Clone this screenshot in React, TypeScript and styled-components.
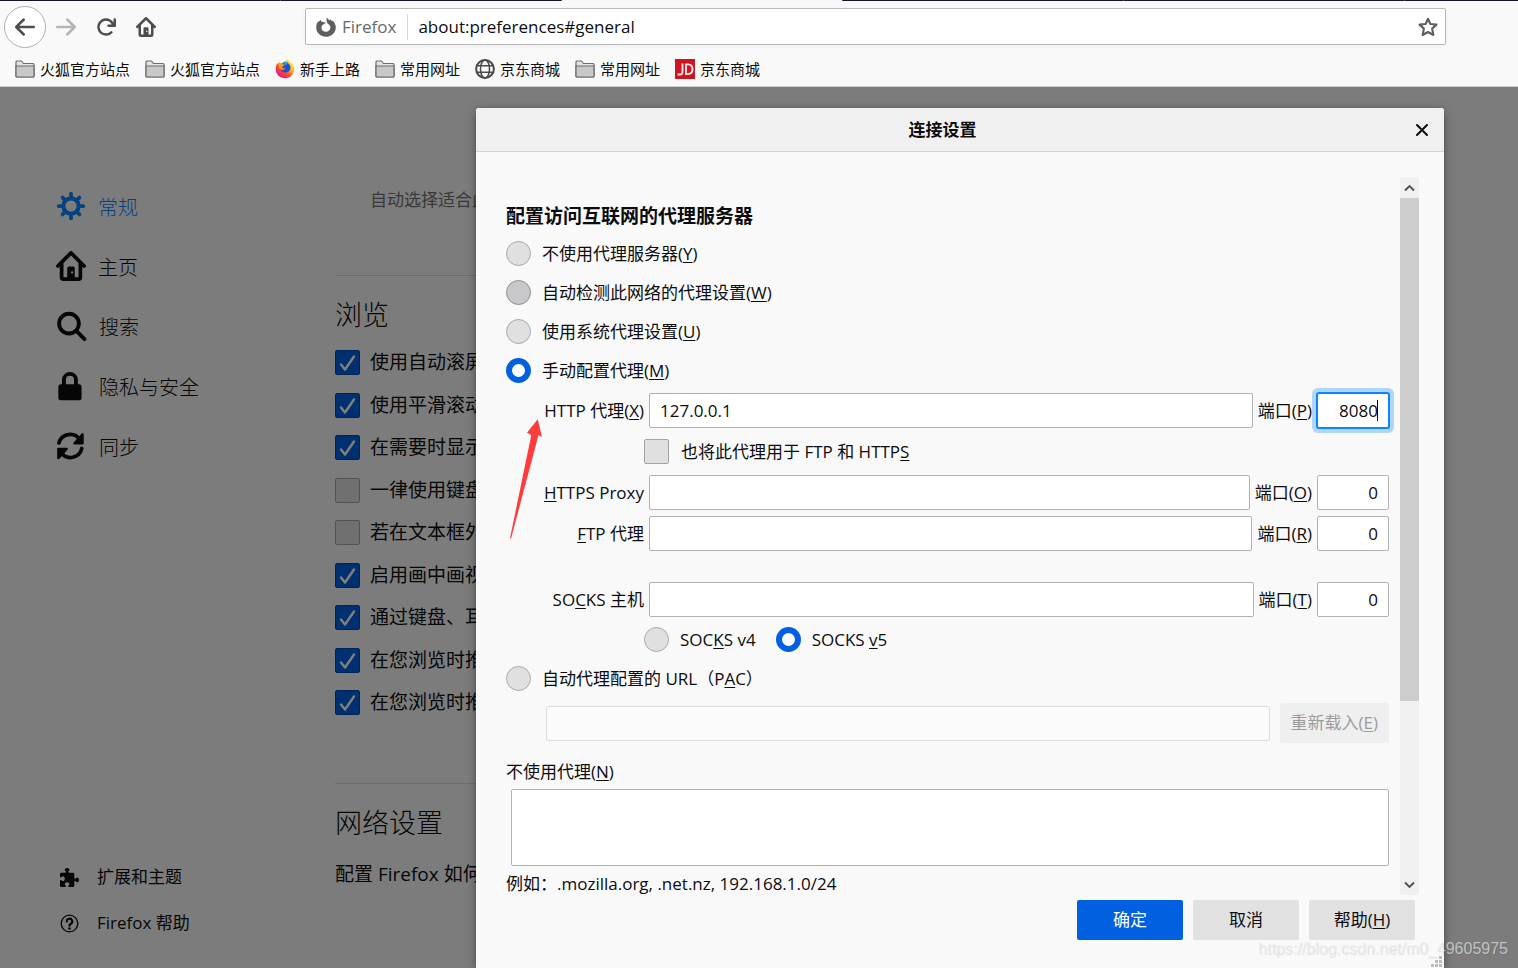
import React from "react";
import styled, { createGlobalStyle, css } from "styled-components";

const GlobalStyle = createGlobalStyle`
  *, *::before, *::after { box-sizing: border-box; }
  body {
    margin: 0;
    background: #f9f9fa;
    color: #0c0c0d;
    font-family: "Open Sans", "Noto Sans CJK SC", sans-serif;
    font-size: 17px;
    line-height: 24px;
  }
  button, input, textarea { font: inherit; color: inherit; margin: 0; }
  h1, h2, h3, p { margin: 0; }
`;

/* ---------- Window ---------- */

const Window = styled.div`
  display: flex;
  flex-direction: column;
  min-height: 100vh;
`;

const TabStrip = styled.div`
  display: flex;
  height: 1px;
  background: #14142b;
`;

const TabEdge = styled.span<{ $active?: boolean }>`
  flex: 0 0 281px;
  border-right: 1px solid #55556a;
  background: ${(p) => (p.$active ? "#f5f6f7" : "transparent")};
`;

const NavBar = styled.nav`
  display: flex;
  align-items: center;
  height: 51px;
  padding: 0 72px 0 4px;
  background: #f9f9fa;
`;

const ToolButton = styled.button<{ $round?: boolean }>`
  display: grid;
  place-items: center;
  width: 40px;
  height: 40px;
  padding: 0;
  border: 0;
  background: transparent;
  color: #4d4d4f;
  &:disabled { color: #b4b4b5; }
  ${(p) =>
    p.$round &&
    css`
      width: 42px;
      height: 42px;
      border: 1px solid #b1b1b3;
      border-radius: 50%;
      background: #fff;
    `}
`;

const AddressBar = styled.div`
  display: flex;
  align-items: center;
  flex: 1;
  height: 37px;
  margin-left: 139px;
  padding: 0 7px 0 10px;
  border: 1px solid #b8b8ba;
  border-radius: 2px;
  background: #fff;
  box-shadow: 0 1px 4px rgba(0, 0, 0, 0.05);
`;

const Identity = styled.span`
  display: flex;
  align-items: center;
  gap: 6px;
  height: 26px;
  padding-right: 11px;
  border-right: 1px solid #d7d7db;
  color: #68686b;
`;

const AddressInput = styled.input`
  flex: 1;
  min-width: 0;
  padding: 0 10px;
  border: 0;
  outline: 0;
  background: transparent;
  color: #0c0c0d;
`;

const StarButton = styled.button`
  display: grid;
  place-items: center;
  padding: 0;
  border: 0;
  background: transparent;
  color: #5f5f61;
`;

const Bookmarks = styled.div`
  display: flex;
  align-items: center;
  gap: 15px;
  height: 35px;
  padding: 0 15px;
  border-bottom: 1px solid #cfcfd1;
  background: #f9f9fa;
`;

const Bookmark = styled.a`
  display: flex;
  align-items: center;
  gap: 5px;
  color: #0c0c0d;
  font-size: 15px;
  line-height: 22px;
  text-decoration: none;
`;

/* ---------- Preferences page ---------- */

const Page = styled.div`
  position: relative;
  display: flex;
  flex: 1;
  background: #f9f9fa;
`;

const Sidebar = styled.aside`
  display: flex;
  flex-direction: column;
  flex: 0 0 335px;
  padding: 91px 0 22px 56px;
`;

const Category = styled.a<{ $selected?: boolean }>`
  display: flex;
  align-items: center;
  gap: 12px;
  height: 60px;
  color: ${(p) => (p.$selected ? "#0a84ff" : "#0c0c0d")};
  font-size: 20px;
  font-weight: 300;
  text-decoration: none;
  & > svg { margin-bottom: 4px; }
`;

const SideFooter = styled.div`
  margin-top: auto;
`;

const SideLink = styled.a`
  display: flex;
  align-items: center;
  gap: 18px;
  height: 46px;
  padding-left: 4px;
  color: #0c0c0d;
  text-decoration: none;
`;

const Content = styled.main`
  flex: 1;
  min-width: 0;
  margin-right: 74px;
  overflow: hidden;
  white-space: nowrap;
`;

const Note = styled.p`
  padding: 101px 0 63px 35px;
  color: #737373;
`;

const Section = styled.section`
  border-top: 1px solid #d7d7db;
  padding-top: 22px;
`;

const SectionTitle = styled.h2`
  margin-bottom: 14px;
  font-size: 27px;
  font-weight: 300;
  line-height: 34px;
`;

const PrefRow = styled.label`
  display: flex;
  align-items: center;
  gap: 10px;
  height: 32px;
  margin-bottom: 11px;
  font-size: 19px;
  line-height: 32px;
  &:nth-of-type(even) { margin-bottom: 10px; }
`;

const NetworkSection = styled(Section)`
  margin-top: 65px;
`;

const NetworkText = styled.p`
  padding-top: 4px;
  font-size: 19px;
  line-height: 32px;
`;

const Shade = styled.div`
  position: absolute;
  inset: 0;
  display: flex;
  padding: 21px 74px 0 476px;
  background: rgba(0, 0, 0, 0.5);
`;

/* ---------- Controls ---------- */

const BoxStack = styled.span`
  display: grid;
  flex: none;
  width: 25px;
  height: 25px;
  & > * { grid-area: 1 / 1; }
`;

const CheckInput = styled.input`
  appearance: none;
  width: 25px;
  height: 25px;
  border: 1px solid #a4a4a6;
  border-radius: 2px;
  background: #e0e0e1;
  &:checked { background: #0060df; border-color: #0049ae; }
`;

const RadioInput = styled.input<{ $hover?: boolean }>`
  appearance: none;
  flex: none;
  width: 25px;
  height: 25px;
  border: 1px solid ${(p) => (p.$hover ? "#8f8f91" : "#a9a9ab")};
  border-radius: 50%;
  background: ${(p) => (p.$hover ? "#c8c8ca" : "#e0e0e1")};
  &:checked {
    border: 6px solid #0060df;
    background: #fff;
  }
`;

const TextInput = styled.input`
  flex: 1;
  min-width: 0;
  height: 35px;
  padding: 0 10px;
  border: 1px solid #b1b1b3;
  border-radius: 2px;
  outline: 0;
  background: #fff;
  &:disabled { border-color: #dcdcdd; background: #fbfbfb; }
`;

const PortBox = styled.span`
  position: relative;
  display: flex;
  flex: 0 0 72px;
`;

const PortInput = styled(TextInput)<{ $focused?: boolean }>`
  width: 72px;
  text-align: right;
  ${(p) =>
    p.$focused &&
    css`
      border-color: #0a84ff;
      box-shadow: 0 0 0 1px #0a84ff, 0 0 0 5px rgba(10, 132, 255, 0.3);
    `}
`;

const Caret = styled.span`
  position: absolute;
  top: 7px;
  right: 11px;
  width: 1px;
  height: 21px;
  background: #000;
`;

const Button = styled.button<{ $primary?: boolean }>`
  height: 40px;
  min-width: 106px;
  padding: 0 11px;
  border: 0;
  border-radius: 2px;
  background: ${(p) => (p.$primary ? "#0060df" : "#e1e1e2")};
  color: ${(p) => (p.$primary ? "#fff" : "#0c0c0d")};
  &:disabled { background: #efefef; color: #9c9c9d; }
`;

const Key = styled.u`
  text-decoration-thickness: 1px;
  text-underline-offset: 2px;
`;

/* ---------- Dialog ---------- */

const Dialog = styled.div`
  position: relative;
  display: flex;
  flex-direction: column;
  flex: 1;
  min-width: 0;
  border-radius: 3px 3px 0 0;
  background: #f9f9fa;
  box-shadow: 0 2px 8px rgba(0, 0, 0, 0.45);
`;

const DialogHeader = styled.header`
  display: grid;
  grid-template-columns: 1fr 36px;
  align-items: center;
  height: 44px;
  padding: 0 4px 0 5px;
  border-bottom: 1px solid #d2d2d4;
  border-radius: 3px 3px 0 0;
  background: #f0f0f1;
`;

const DialogTitle = styled.h1`
  font-size: 17px;
  line-height: 24px;
  text-align: center;
`;

const CloseButton = styled.button`
  display: grid;
  place-items: center;
  height: 36px;
  padding: 0;
  border: 0;
  background: transparent;
`;

const ScrollArea = styled.div`
  display: flex;
  height: 718px;
  margin: 25px 25px 0 30px;
`;

const Form = styled.form`
  position: relative;
  flex: 1;
  min-width: 0;
  padding: 27px 11px 0 0;
  overflow: hidden;
`;

const Legend = styled.h2`
  margin-bottom: 6px;
  font-size: 19px;
  line-height: 24px;
`;

const RadioRow = styled.label`
  display: flex;
  align-items: center;
  gap: 11px;
  height: 39px;
`;

const ProxyRow = styled.div`
  display: flex;
  align-items: center;
  gap: 5px;
  height: 41px;
  padding-left: 30px;
`;

const ProxyLabel = styled.label`
  flex: 0 0 108px;
  text-align: right;
  white-space: nowrap;
`;

const ShareRow = styled.label`
  display: flex;
  align-items: center;
  gap: 12px;
  height: 41px;
  padding-left: 138px;
`;

const SocksRow = styled(ProxyRow)`
  margin-top: 25px;
`;

const VersionRow = styled.div`
  display: flex;
  gap: 20px;
  padding-left: 138px;
`;

const PacRow = styled.div`
  display: flex;
  align-items: center;
  gap: 10px;
  margin: 5px 0 17px;
  padding-left: 40px;
`;

const ExceptionsLabel = styled.label`
  display: block;
`;

const Exceptions = styled.textarea`
  display: block;
  width: calc(100% - 5px);
  height: 77px;
  margin: 5px 0 6px 5px;
  border: 1px solid #b1b1b3;
  border-radius: 2px;
  resize: none;
  background: #fff;
`;

const Scrollbar = styled.div`
  display: flex;
  flex-direction: column;
  width: 19px;
  background: #f0f0f0;
`;

const ScrollButton = styled.button`
  display: grid;
  place-items: center;
  height: 21px;
  padding: 0;
  border: 0;
  background: transparent;
  color: #505050;
`;

const Thumb = styled.div`
  height: 503px;
  margin-bottom: auto;
  background: #cdcdcd;
`;

const Actions = styled.footer`
  display: flex;
  justify-content: flex-end;
  gap: 10px;
  padding: 5px 29px 28px;
`;

const Pointer = styled.svg`
  position: absolute;
  left: 0;
  top: 238px;
`;

const Resizer = styled.svg`
  position: absolute;
  right: 1px;
  bottom: 0;
`;

const Watermark = styled.span`
  position: absolute;
  right: 10px;
  bottom: 7px;
  color: rgba(235, 235, 235, 0.65);
  font-family: "Liberation Sans", sans-serif;
  font-size: 16px;
  text-shadow: 1px 1px 1px rgba(0, 0, 0, 0.1);
`;

/* ---------- Icons ---------- */

type IconProps = { size: number; children: React.ReactNode };

const Icon = ({ size, children }: IconProps) => (
  <svg width={size} height={size} viewBox="0 0 16 16" fill="currentColor" aria-hidden="true">
    {children}
  </svg>
);

const BackIcon = () => (
  <Icon size={20}>
    <path d="M15 7H3.414l4.293-4.293a1 1 0 0 0-1.414-1.414l-6 6a1 1 0 0 0 0 1.414l6 6a1 1 0 0 0 1.414-1.414L3.414 9H15a1 1 0 0 0 0-2z" />
  </Icon>
);

const ForwardIcon = () => (
  <Icon size={20}>
    <path d="M1 7h11.586L8.293 2.707a1 1 0 0 1 1.414-1.414l6 6a1 1 0 0 1 0 1.414l-6 6a1 1 0 0 1-1.414-1.414L12.586 9H1a1 1 0 0 1 0-2z" />
  </Icon>
);

const ReloadIcon = () => (
  <Icon size={20}>
    <path d="M15 1a1 1 0 0 0-1 1v2.418A6.995 6.995 0 1 0 8 15a6.954 6.954 0 0 0 4.95-2.05 1 1 0 0 0-1.414-1.414A5.019 5.019 0 1 1 12.549 6H10a1 1 0 0 0 0 2h5a1 1 0 0 0 1-1V2a1 1 0 0 0-1-1z" />
  </Icon>
);

const HomeIcon = ({ size }: { size: number }) => (
  <Icon size={size}>
    <path d="M15.707 7.293l-7-7a1 1 0 0 0-1.414 0l-7 7a1 1 0 0 0 1.414 1.414L2 8.414V14a2 2 0 0 0 2 2h8a2 2 0 0 0 2-2V8.414l.293.293a1 1 0 0 0 1.414-1.414zM4 14V6.414l4-4 4 4V14h-2V9a.8.8 0 0 0-.8-.8H6.800a.8.8 0 0 0-.8.8v5zm4.600-2a.6.6 0 1 1 0-1.200.6.6 0 0 1 0 1.200z" fillRule="evenodd" />
  </Icon>
);

const SearchIcon = () => (
  <Icon size={31}>
    <g fill="none" stroke="currentColor" strokeWidth="2" strokeLinecap="round">
      <circle cx="6.700" cy="6.500" r="5.100" />
      <path d="M10.500 10.300l4.200 4.200" />
    </g>
  </Icon>
);

const GearIcon = () => (
  <Icon size={30}>
    <g fill="none" stroke="currentColor" strokeLinecap="round">
      <circle cx="8" cy="8" r="4.100" strokeWidth="2.200" />
      <path strokeWidth="2" d="M8 1.400v2.500M8 12.100v2.500M1.400 8h2.500M12.100 8h2.500M3.500 3.500l1.500 1.500M11 11l1.500 1.500M3.500 12.500L5 11M11 5l1.500-1.500" />
    </g>
  </Icon>
);

const LockIcon = () => (
  <Icon size={31}>
    <rect x="1.200" y="6.900" width="12" height="8.200" rx="1.300" />
    <path d="M4.100 7.500V4.600a3.100 3.100 0 0 1 6.200 0V7.500" fill="none" stroke="currentColor" strokeWidth="2" />
  </Icon>
);

const SyncIcon = () => (
  <Icon size={31}>
    <g fill="none" stroke="currentColor" strokeWidth="1.900" strokeLinecap="round" strokeLinejoin="round">
      <path d="M1.500 6.200A6 6 0 0 1 12.300 4.500" />
      <path d="M13.700 1.700v4.700H9.500z" fill="currentColor" strokeWidth="1.200" />
      <path d="M13.300 9A6 6 0 0 1 2.600 11.200" />
      <path d="M1.200 14V9.300h4.300z" fill="currentColor" strokeWidth="1.200" />
    </g>
  </Icon>
);

const PuzzleIcon = () => (
  <Icon size={19}>
    <path d="M14.500 8c-.971 0-1 1-1.750 1a.765.765 0 0 1-.75-.75V5a1 1 0 0 0-1-1H7.750A.765.765 0 0 1 7 3.250c0-.75 1-.779 1-1.750C8 .635 7.100 0 6 0S4 .635 4 1.500c0 .971 1 1 1 1.750a.765.765 0 0 1-.75.75H1a1 1 0 0 0-1 1v2.250A.765.765 0 0 0 .75 8c.75 0 .779-1 1.750-1C3.365 7 4 7.900 4 9s-.635 2-1.500 2c-.971 0-1-1-1.750-1a.765.765 0 0 0-.75.75V15a1 1 0 0 0 1 1h3.250a.765.765 0 0 0 .75-.75c0-.75-1-.779-1-1.750 0-.865.9-1.500 2-1.500s2 .635 2 1.500c0 .971-1 1-1 1.750a.765.765 0 0 0 .75.75H11a1 1 0 0 0 1-1v-3.250a.765.765 0 0 1 .75-.75c.75 0 .779 1 1.750 1 .865 0 1.500-.9 1.500-2s-.635-2-1.500-2z" />
  </Icon>
);

const HelpIcon = () => (
  <Icon size={19}>
    <g fill="none" stroke="currentColor" strokeLinecap="round">
      <circle cx="8" cy="8" r="7" strokeWidth="1.100" />
      <path d="M5.700 6.300a2.300 2.300 0 1 1 3.500 1.900c-.8.5-1.200.8-1.200 1.600" strokeWidth="1.800" />
    </g>
    <circle cx="8" cy="12.200" r="1.100" />
  </Icon>
);

const StarIcon = () => (
  <Icon size={20}>
    <path d="M8 1.400l1.900 4.200 4.900.5-3.500 3.200 1 5.100L8 12l-4.300 2.400 1-5.100L1.200 6.100l4.900-.5z" fill="none" stroke="currentColor" strokeWidth="1.700" strokeLinejoin="round" />
  </Icon>
);

const FolderIcon = () => (
  <svg width="20" height="20" viewBox="0 0 20 20" aria-hidden="true">
    <path d="M1 3a1 1 0 0 1 1-1h4.500l2 2.500H18a1 1 0 0 1 1 1V17a1 1 0 0 1-1 1H2a1 1 0 0 1-1-1z" fill="#e4e4e4" stroke="#6c6c6c" strokeWidth="1.200" />
    <path d="M1 7h18v10a1 1 0 0 1-1 1H2a1 1 0 0 1-1-1z" fill="#c8c8c8" stroke="#6c6c6c" strokeWidth="1.200" />
  </svg>
);

const GlobeIcon = () => (
  <svg width="20" height="20" viewBox="0 0 20 20" fill="none" stroke="#4a4a4c" strokeWidth="1.500" aria-hidden="true">
    <circle cx="10" cy="10" r="8.900" strokeWidth="2" />
    <ellipse cx="10" cy="10" rx="4.500" ry="9" />
    <path d="M2 6.700h16M2 13.300h16" />
  </svg>
);

const JdIcon = () => (
  <svg width="20" height="20" viewBox="0 0 20 20" fill="none" stroke="#fbe4e4" strokeWidth="1.900" aria-hidden="true">
    <rect width="20" height="20" fill="#cc1423" stroke="none" />
    <path d="M7.500 4.500v8.500q0 2.500-2.500 2.500H2.500M11 5.400v9.700h2q4.500-.3 4.500-4.900T13 5.400z" />
  </svg>
);

const FirefoxMark = () => (
  <svg width="20" height="20" viewBox="0 0 20 20" aria-hidden="true">
    <path fill="#5f5f61" d="M11 .3c.5 1.600 1.500 2.400 2.800 2.900l.6-1c.4.9.9 1.300 1.600 1.700l.9-.2c1.700 1.700 2.900 4 2.900 6.500 0 5.400-4.400 9.600-9.800 9.600S.2 15.800.2 10.600c0-2.800.9-5 2.200-6.600l.3 1.300c.5-1.200 1.200-1.900 2.100-2.500l.3 1.900c.9-.2 1.900-.1 2.700.5l1.900.4c-.3.900-.9 1.300-1.700 1.500l-1.700 1.200c-.7.900-.8 1.600-.8 2.400 0 2.400 2 4 4.400 4s4.500-1.700 4.500-4.200c0-1.700-.9-2.800-2.100-3.600-1.500-1-2.400-3-1.300-6.600z" />
  </svg>
);

const FirefoxIcon = () => (
  <svg width="20" height="20" viewBox="0 0 20 20" aria-hidden="true">
    <defs>
      <linearGradient id="flame" x1="0.850" y1="0.100" x2="0.200" y2="0.900">
        <stop offset="0" stopColor="#fff14a" />
        <stop offset="0.350" stopColor="#ffb41f" />
        <stop offset="0.650" stopColor="#ff4a2f" />
        <stop offset="1" stopColor="#e6187e" />
      </linearGradient>
    </defs>
    <path fill="url(#flame)" d="M12.500.5c1.200.8 2.200 1.600 3 2.700 2.500 1.600 3.900 4.300 3.700 7.200-.2 5-4.200 8.900-9.200 8.900S.8 15.300.8 10.300c0-2.800.6-4.800 1.700-6.200l.5 1c.4-1 1-1.700 1.900-2.200l.5 1.700z" />
    <path fill="#1f50d6" d="M7.500 4.600c1.200-1.900 4-2.100 5.700-.4 2.400 1.700 3 5.300 1.200 7.500-2 2.400-6.300 2.300-8.200-.2-.9-1.300-.9-2.400-.3-3.600z" />
    <path fill="#1aa0f4" d="M8.400 3.800c1.600-1.500 3.800-1.200 4.800.4-1 .2-1.600.9-1.500 1.700l-3-.4z" />
    <path fill="#ff9a1c" d="M3.500 5.200c1.200-.8 2.500-.6 3.500 0l2.800.4c-.3.900-1 1.400-2 1.700l-.8 1.300c1 1.200 2.500.8 3.600.4-.8 1.300-2 2-3.600 1.900-1.500-.1-2.500-.8-3.100-1.800z" />
  </svg>
);

const CheckMark = () => (
  <svg width="25" height="25" viewBox="0 0 25 25" fill="none" stroke="#fff" strokeWidth="2.400" strokeLinecap="round" strokeLinejoin="round" pointerEvents="none" aria-hidden="true">
    <path d="M6 14.500l4 5L19 6.500" />
  </svg>
);

const CloseIcon = () => (
  <svg width="14" height="14" viewBox="0 0 14 14" stroke="#0c0c0d" strokeWidth="2" strokeLinecap="round" aria-hidden="true">
    <path d="M2 2l10 10M12 2L2 12" />
  </svg>
);

const Chevron = ({ down }: { down?: boolean }) => (
  <svg width="11" height="8" viewBox="0 0 11 8" fill="none" stroke="currentColor" strokeWidth="1.900" aria-hidden="true">
    <path d={down ? "M1 1.500l4.500 4.500L10 1.500" : "M1 6.500L5.500 2 10 6.500"} />
  </svg>
);

/* ---------- Parts ---------- */

type CheckProps = { id?: string; checked?: boolean };

const Checkbox = ({ id, checked }: CheckProps) => (
  <BoxStack>
    <CheckInput id={id} type="checkbox" defaultChecked={checked} />
    {checked && <CheckMark />}
  </BoxStack>
);

type PortProps = { id: string; letter: string; value: string; focused?: boolean };

const Port = ({ id, letter, value, focused }: PortProps) => (
  <>
    <label htmlFor={id}>
      端口(<Key>{letter}</Key>)
    </label>
    <PortBox>
      <PortInput id={id} type="text" inputMode="numeric" defaultValue={value} $focused={focused} />
      {focused && <Caret />}
    </PortBox>
  </>
);

const bookmarks = [
  { label: "火狐官方站点", icon: <FolderIcon /> },
  { label: "火狐官方站点", icon: <FolderIcon /> },
  { label: "新手上路", icon: <FirefoxIcon /> },
  { label: "常用网址", icon: <FolderIcon /> },
  { label: "京东商城", icon: <GlobeIcon /> },
  { label: "常用网址", icon: <FolderIcon /> },
  { label: "京东商城", icon: <JdIcon /> },
];

const categories = [
  { label: "常规", icon: <GearIcon />, selected: true },
  { label: "主页", icon: <HomeIcon size={30} /> },
  { label: "搜索", icon: <SearchIcon /> },
  { label: "隐私与安全", icon: <LockIcon /> },
  { label: "同步", icon: <SyncIcon /> },
];

const browsing = [
  { label: "使用自动滚屏", checked: true },
  { label: "使用平滑滚动", checked: true },
  { label: "在需要时显示触摸键盘", checked: true },
  { label: "一律使用键盘浏览页面", checked: false },
  { label: "若在文本框外输入", checked: false },
  { label: "启用画中画视频控制", checked: true },
  { label: "通过键盘、耳机控制媒体", checked: true },
  { label: "在您浏览时推荐扩展", checked: true },
  { label: "在您浏览时推荐新功能", checked: true },
];

export default function App() {
  return (
    <Window>
      <GlobalStyle />
      <TabStrip>
        <TabEdge />
        <TabEdge />
        <TabEdge $active />
        <TabEdge />
        <TabEdge />
      </TabStrip>
      <NavBar>
        <ToolButton $round aria-label="后退"><BackIcon /></ToolButton>
        <ToolButton disabled aria-label="前进"><ForwardIcon /></ToolButton>
        <ToolButton aria-label="刷新"><ReloadIcon /></ToolButton>
        <ToolButton aria-label="主页"><HomeIcon size={20} /></ToolButton>
        <AddressBar>
          <Identity><FirefoxMark />Firefox</Identity>
          <AddressInput aria-label="地址" defaultValue="about:preferences#general" />
          <StarButton aria-label="收藏"><StarIcon /></StarButton>
        </AddressBar>
      </NavBar>
      <Bookmarks>
        {bookmarks.map((b, i) => (
          <Bookmark key={i} href="#">{b.icon}{b.label}</Bookmark>
        ))}
      </Bookmarks>

      <Page>
        <Sidebar>
          {categories.map((c) => (
            <Category key={c.label} href="#" $selected={c.selected}>{c.icon}{c.label}</Category>
          ))}
          <SideFooter>
            <SideLink href="#"><PuzzleIcon />扩展和主题</SideLink>
            <SideLink href="#"><HelpIcon />Firefox 帮助</SideLink>
          </SideFooter>
        </Sidebar>
        <Content>
          <Note>自动选择适合此设备的设置</Note>
          <Section>
            <SectionTitle>浏览</SectionTitle>
            {browsing.map((b) => (
              <PrefRow key={b.label}>
                <Checkbox checked={b.checked} />
                {b.label}
              </PrefRow>
            ))}
          </Section>
          <NetworkSection>
            <SectionTitle>网络设置</SectionTitle>
            <NetworkText>配置 Firefox 如何连接互联网</NetworkText>
          </NetworkSection>
        </Content>

        <Shade>
          <Dialog role="dialog" aria-labelledby="dialog-title">
            <DialogHeader>
              <DialogTitle id="dialog-title">连接设置</DialogTitle>
              <CloseButton aria-label="关闭"><CloseIcon /></CloseButton>
            </DialogHeader>
            <ScrollArea>
              <Form id="proxy">
                <Legend>配置访问互联网的代理服务器</Legend>
                <RadioRow>
                  <RadioInput type="radio" name="mode" />
                  <span>不使用代理服务器(<Key>Y</Key>)</span>
                </RadioRow>
                <RadioRow>
                  <RadioInput type="radio" name="mode" $hover />
                  <span>自动检测此网络的代理设置(<Key>W</Key>)</span>
                </RadioRow>
                <RadioRow>
                  <RadioInput type="radio" name="mode" />
                  <span>使用系统代理设置(<Key>U</Key>)</span>
                </RadioRow>
                <RadioRow>
                  <RadioInput type="radio" name="mode" defaultChecked />
                  <span>手动配置代理(<Key>M</Key>)</span>
                </RadioRow>
                <ProxyRow>
                  <ProxyLabel htmlFor="http">HTTP 代理(<Key>X</Key>)</ProxyLabel>
                  <TextInput id="http" defaultValue="127.0.0.1" />
                  <Port id="http-port" letter="P" value="8080" focused />
                </ProxyRow>
                <ShareRow>
                  <Checkbox />
                  <span>也将此代理用于 FTP 和 HTTP<Key>S</Key></span>
                </ShareRow>
                <ProxyRow>
                  <ProxyLabel htmlFor="https"><Key>H</Key>TTPS Proxy</ProxyLabel>
                  <TextInput id="https" />
                  <Port id="https-port" letter="O" value="0" />
                </ProxyRow>
                <ProxyRow>
                  <ProxyLabel htmlFor="ftp"><Key>F</Key>TP 代理</ProxyLabel>
                  <TextInput id="ftp" />
                  <Port id="ftp-port" letter="R" value="0" />
                </ProxyRow>
                <SocksRow>
                  <ProxyLabel htmlFor="socks">SO<Key>C</Key>KS 主机</ProxyLabel>
                  <TextInput id="socks" />
                  <Port id="socks-port" letter="T" value="0" />
                </SocksRow>
                <VersionRow>
                  <RadioRow>
                    <RadioInput type="radio" name="socks-version" />
                    <span>SOC<Key>K</Key>S v4</span>
                  </RadioRow>
                  <RadioRow>
                    <RadioInput type="radio" name="socks-version" defaultChecked />
                    <span>SOCKS <Key>v</Key>5</span>
                  </RadioRow>
                </VersionRow>
                <RadioRow>
                  <RadioInput type="radio" name="mode" />
                  <span>自动代理配置的 URL（P<Key>A</Key>C）</span>
                </RadioRow>
                <PacRow>
                  <TextInput disabled aria-label="自动代理配置的 URL" />
                  <Button type="button" disabled>重新载入(<Key>E</Key>)</Button>
                </PacRow>
                <ExceptionsLabel htmlFor="exceptions">不使用代理(<Key>N</Key>)</ExceptionsLabel>
                <Exceptions id="exceptions" />
                <p>例如：.mozilla.org, .net.nz, 192.168.1.0/24</p>
                <Pointer width="40" height="125" viewBox="0 0 40 125" aria-hidden="true">
                  <path d="M31.700 4.300L36 22l-3.500-2L5 123.700l-1-.5L25.300 20l-4.300-2.300z" fill="#ff3b3b" />
                </Pointer>
              </Form>
              <Scrollbar>
                <ScrollButton type="button" aria-label="向上滚动"><Chevron /></ScrollButton>
                <Thumb />
                <ScrollButton type="button" aria-label="向下滚动"><Chevron down /></ScrollButton>
              </Scrollbar>
            </ScrollArea>
            <Actions>
              <Button $primary type="submit" form="proxy">确定</Button>
              <Button type="button">取消</Button>
              <Button type="button">帮助(<Key>H</Key>)</Button>
            </Actions>
            <Resizer width="12" height="12" viewBox="0 0 12 12" fill="#bdbdbd" aria-hidden="true">
              <path d="M8 0h3v3H8zM8 4h3v3H8zM4 4h3v3H4zM8 8h3v3H8zM4 8h3v3H4zM0 8h3v3H0z" />
            </Resizer>
          </Dialog>
          <Watermark>https://blog.csdn.net/m0_49605975</Watermark>
        </Shade>
      </Page>
    </Window>
  );
}
